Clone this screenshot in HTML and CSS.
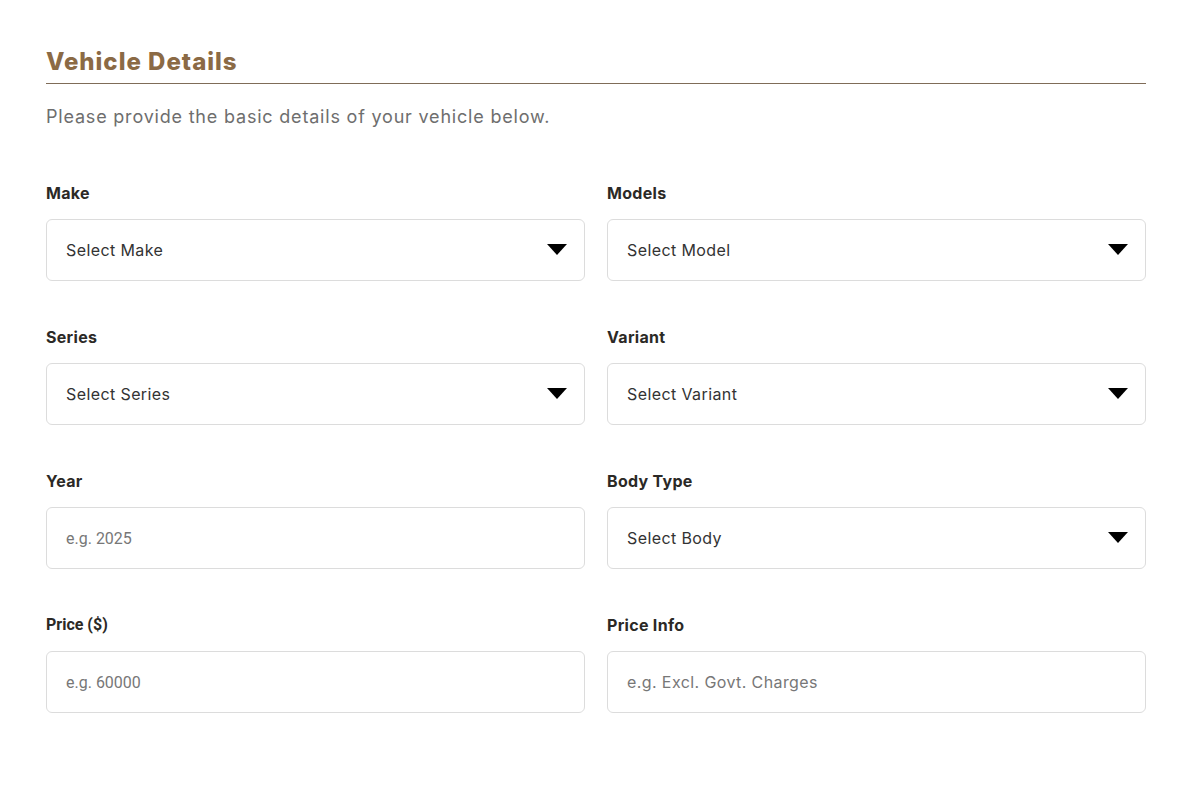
FILE: index.html
```html
<!DOCTYPE html>
<html lang="en">
<head>
  <meta charset="UTF-8">
  <meta name="viewport" content="width=device-width, initial-scale=1.0">
  <title>Vehicle Details</title>
  <link rel="stylesheet" href="styles.css">
</head>
<body>
  <section class="vehicle-form">
    <h2 class="section-title">Vehicle Details</h2>
    <p class="section-intro">Please provide the basic details of your vehicle below.</p>

    <div class="fields">
      <div class="field">
        <label for="make">Make</label>
        <div class="select-wrap">
          <select id="make">
            <option>Select Make</option>
          </select>
          <svg class="caret" viewBox="0 0 20 11"><path d="M0 0h20L10 11z" /></svg>
        </div>
      </div>
      <div class="field">
        <label for="model">Models</label>
        <div class="select-wrap">
          <select id="model">
            <option>Select Model</option>
          </select>
          <svg class="caret" viewBox="0 0 20 11"><path d="M0 0h20L10 11z" /></svg>
        </div>
      </div>
      <div class="field">
        <label for="series">Series</label>
        <div class="select-wrap">
          <select id="series">
            <option>Select Series</option>
          </select>
          <svg class="caret" viewBox="0 0 20 11"><path d="M0 0h20L10 11z" /></svg>
        </div>
      </div>
      <div class="field">
        <label for="variant">Variant</label>
        <div class="select-wrap">
          <select id="variant">
            <option>Select Variant</option>
          </select>
          <svg class="caret" viewBox="0 0 20 11"><path d="M0 0h20L10 11z" /></svg>
        </div>
      </div>
      <div class="field">
        <label for="year">Year</label>
        <input type="number" id="year" class="num" placeholder="e.g. 2025">
      </div>
      <div class="field">
        <label for="body">Body Type</label>
        <div class="select-wrap">
          <select id="body">
            <option>Select Body</option>
          </select>
          <svg class="caret" viewBox="0 0 20 11"><path d="M0 0h20L10 11z" /></svg>
        </div>
      </div>
      <div class="field">
        <label for="price" class="alt-label">Price ($)</label>
        <input type="number" id="price" class="num" placeholder="e.g. 60000">
      </div>
      <div class="field">
        <label for="price-info">Price Info</label>
        <input type="text" id="price-info" placeholder="e.g. Excl. Govt. Charges">
      </div>
    </div>
  </section>
</body>
</html>
```

FILE: styles.css
```css
:root {
	--brown: #8b6a45;
	--text: #2b2926;
	--muted: #6e6e6e;
	--border: #dcdcdc;
}

body {
	margin: 0;
	background: #fff;
	font-family: Inter, "Noto Sans", sans-serif;
	color: var(--text);
}

.vehicle-form {
	width: 1100px;
	padding: 45px 46px;
}

.section-title {
	margin: 0;
	padding-bottom: 4px;
	font-size: 24px;
	font-weight: 800;
	line-height: 34px;
	letter-spacing: 1px;
	color: var(--brown);
	border-bottom: 1px solid #7f6c58;
}

.section-intro {
	margin: 19px 0 0;
	font-size: 18px;
	line-height: 27px;
	letter-spacing: 0.8px;
	color: var(--muted);
}

.fields {
	display: grid;
	grid-template-columns: 1fr 1fr;
	column-gap: 22px;
	row-gap: 44px;
	margin-top: 51px;
}

.field {
	display: flex;
	flex-direction: column;
	gap: 14px;
}

.field label {
	font-size: 16px;
	font-weight: 700;
	line-height: 24px;
	letter-spacing: 0.3px;
	color: var(--text);
}

.field label.alt-label {
	font-family: Roboto, "Liberation Sans", sans-serif;
	letter-spacing: 0;
}

.select-wrap {
	position: relative;
}

select,
input {
	box-sizing: border-box;
	width: 100%;
	height: 62px;
	margin: 0;
	padding: 0 19px;
	border: 1px solid var(--border);
	border-radius: 6px;
	background: #fff;
	font-family: inherit;
	font-size: 16px;
	letter-spacing: 0.4px;
	color: #333;
	outline: none;
}

select {
	appearance: none;
	-webkit-appearance: none;
}

input::placeholder {
	color: #777;
}

input.num {
	font-family: Roboto, "Liberation Sans", sans-serif;
	letter-spacing: 0;
	-moz-appearance: textfield;
}

input.num::-webkit-inner-spin-button,
input.num::-webkit-outer-spin-button {
	-webkit-appearance: none;
	margin: 0;
}

.caret {
	position: absolute;
	right: 18px;
	top: 25px;
	width: 20px;
	height: 11px;
	fill: #000;
	pointer-events: none;
}
```
